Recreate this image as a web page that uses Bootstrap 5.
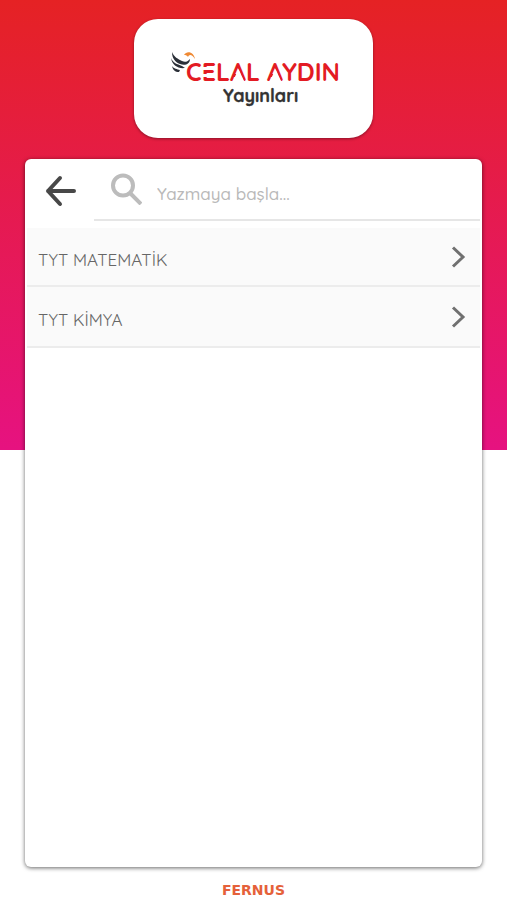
<!DOCTYPE html>
<html lang="tr">
<head>
<meta charset="utf-8">
<meta name="viewport" content="width=device-width, initial-scale=1">
<title>Celal Aydın Yayınları</title>
<link href="https://cdn.jsdelivr.net/npm/bootstrap@5.3.0/dist/css/bootstrap.min.css" rel="stylesheet">
<style>
body{font-family:Quicksand,Lato,"Noto Sans",sans-serif;background:#fff linear-gradient(#e52224,#e61280) no-repeat 0 0/100% 50vh}
.brand-box{width:47%;height:119px;margin-top:19px;border-radius:24px;background:#fff;box-shadow:0 1px 3px rgba(0,0,0,.4)}
.brand-art{width:172px;height:60px}
.panel{margin:21px 25px 0;background:#fff;border-radius:6px;box-shadow:0 1px 4px rgba(0,0,0,.6)}
.panel-top{height:69px;padding:0 2px 0 20px}
.back-btn{width:32px;height:64px;margin-right:17px}
.search-line{height:62px;border-bottom:2px solid #e6e6e6;padding:0 12px 0 16px}
.search-input{font-size:17px;font-weight:500;line-height:28px;margin-left:15px;padding:9px 0 0;color:#555}
.search-input::placeholder{color:#b9b9b9;opacity:1}
.search-input:focus{outline:1px solid #ddd}
.entry{height:61px;margin:0 2px;padding:5px 14px 0 11px;background:#fafafa;border-bottom:2px solid #ececec;color:#666;font-size:17px;line-height:24px}
.entry:first-child{height:59px}
.entry:hover{background:#f4f4f4}
.entry span{padding-top:2px}
.entry svg{margin-top:-4px}
.maker{height:33px;padding-top:10px;font:bold 14px/26px "DejaVu Sans",sans-serif;color:#e5613a}
</style>
</head>
<body class="min-vh-100 d-flex flex-column">
<header class="brand-box mx-auto d-flex align-items-center justify-content-center">
<svg class="brand-art" viewBox="0 0 172 60" role="img" aria-label="Celal Aydın Yayınları">
<text x="18" y="32" font-family="Quicksand, Lato, sans-serif" font-weight="700" font-size="25" fill="#e31b23">CELAL AYDIN</text>
<g fill="#fff">
<path d="M35 18H47V21H35ZM35 25H47V28H35Z"/>
<path d="M70.500 20L64.500 33H76.500ZM107.500 20L101.500 33H113.500Z"/>
</g>
<text x="55" y="53" font-family="Quicksand, Lato, sans-serif" font-weight="700" font-size="18" fill="#333" stroke="#333" stroke-width=".3">Yayınları</text>
<g fill="#2b3038">
<path d="M4 3C6 8 10 10 14 12C17 13.500 19 13 22 10C22 15 17 17 12 15C7 13 4 9 4 3Z"/>
<path d="M3 9C5 14 9 15 14 17L17 19C10 20 4 16 3 9Z"/>
<path d="M4 17C6 20 9 20 12 21L11 23C7 23 5 21 4 17Z"/>
</g>
<path d="M16 6C19 1 26 3 27 10C24 5 21 5 20 8C19 6.500 18 6 16 6Z" fill="#ef8a35"/>
</svg>
</header>
<main class="panel flex-grow-1">
<div class="panel-top d-flex">
<button type="button" class="back-btn btn p-0 border-0 flex-shrink-0 d-flex align-items-center" aria-label="Geri">
<svg width="32" height="32" viewBox="0 0 32 32" fill="none" stroke="#484848" stroke-width="4" stroke-linecap="round" stroke-linejoin="round"><path d="M15 3L3 16L15 29M3 16H29"/></svg>
</button>
<div class="search-line flex-grow-1 d-flex align-items-center">
<svg class="flex-shrink-0" width="32" height="32" viewBox="0 0 32 32" fill="none" stroke="#bcbcbc" stroke-width="4"><circle cx="13" cy="12.500" r="10"/><path d="M20 20L31 31"/></svg>
<label for="q" class="visually-hidden">Ara</label>
<input id="q" type="text" class="search-input border-0 bg-transparent w-100" placeholder="Yazmaya başla...">
</div>
</div>
<nav aria-label="Dersler">
<a href="#matematik" class="entry d-flex align-items-center justify-content-between text-decoration-none"><span>TYT MATEMATİK</span>
<svg width="16" height="22" viewBox="0 0 16 22" fill="none" stroke="#707070" stroke-width="3"><path d="M3 1.500L13 11L3 20.500"/></svg></a>
<a href="#kimya" class="entry d-flex align-items-center justify-content-between text-decoration-none"><span>TYT KİMYA</span>
<svg width="16" height="22" viewBox="0 0 16 22" fill="none" stroke="#707070" stroke-width="3"><path d="M3 1.500L13 11L3 20.500"/></svg></a>
</nav>
</main>
<footer class="maker text-center">FERNUS</footer>
<script src="https://cdn.jsdelivr.net/npm/bootstrap@5.3.0/dist/js/bootstrap.bundle.min.js"></script>
</body>
</html>
